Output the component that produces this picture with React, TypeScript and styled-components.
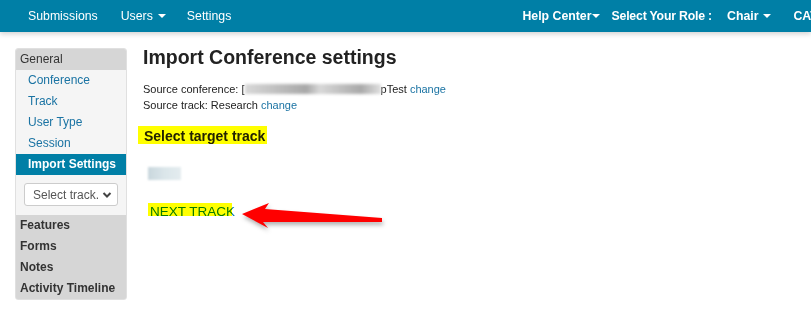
import styled, { createGlobalStyle } from 'styled-components';

const GlobalStyle = createGlobalStyle`
  html, body {
    margin: 0;
    padding: 0;
    background: #fff;
    font-family: "Liberation Sans", Arial, sans-serif;
    color: #333;
  }
`;

const NavBar = styled.nav`
  height: 32px;
  background: #007fa6;
  box-shadow: 0 2px 5px rgba(0, 0, 0, 0.18);
  display: flex;
  align-items: center;
  padding-left: 28px;
  white-space: nowrap;
  overflow: hidden;
`;

const NavGroup = styled.div<{ $right?: boolean }>`
  display: flex;
  align-items: center;
  gap: 23px;
  margin-left: ${(p) => (p.$right ? 'auto' : '0')};
  margin-right: ${(p) => (p.$right ? '-15px' : '0')};
`;

const NavItem = styled.span<{ $bold?: boolean; $ml?: number }>`
  color: #fff;
  font-size: 12.3px;
  font-weight: ${(p) => (p.$bold ? 'bold' : 'normal')};
  display: inline-flex;
  align-items: center;
  margin-left: ${(p) => p.$ml ?? 0}px;
`;

const Caret = styled.span<{ $tight?: boolean }>`
  display: inline-block;
  margin-left: ${(p) => (p.$tight ? 0 : 5)}px;
  border-left: 4px solid transparent;
  border-right: 4px solid transparent;
  border-top: 4px solid #fff;
`;

const Body = styled.div`
  display: flex;
  gap: 16px;
  padding: 16px 0 0 15px;
`;

const Sidebar = styled.aside`
  width: 110px;
  flex-shrink: 0;
  background: #f5f5f5;
  border: 1px solid #e0e0e0;
  border-radius: 3px;
  overflow: hidden;
`;

const SectionHead = styled.div<{ $bold?: boolean }>`
  background: #d6d6d6;
  padding: 0 4px;
  height: 21px;
  line-height: 21px;
  font-size: 12px;
  font-weight: ${(p) => (p.$bold ? 'bold' : 'normal')};
  color: #333;
`;

const Group = styled.div`
  background: #d6d6d6;
`;

const SideLink = styled.div<{ $active?: boolean }>`
  height: 21px;
  line-height: 21px;
  padding-left: 12px;
  font-size: 12px;
  color: ${(p) => (p.$active ? '#fff' : '#1a73a3')};
  background: ${(p) => (p.$active ? '#007fa6' : 'transparent')};
  font-weight: ${(p) => (p.$active ? 'bold' : 'normal')};
`;

const SelectWrap = styled.div`
  padding: 8px 8px 9px;
`;

const FakeSelect = styled.div`
  height: 23px;
  border: 1px solid #ccc;
  border-radius: 3px;
  background: #fff;
  display: flex;
  align-items: center;
  justify-content: space-between;
  padding: 0 5px 0 8px;
  font-size: 12px;
  color: #555;
  box-sizing: border-box;
`;

const Main = styled.main`
  position: relative;
  flex: 1;
`;

const Title = styled.h1`
  margin: -4px 0 11px;
  font-size: 19.5px;
  font-weight: bold;
  color: #222;
  line-height: 26px;
`;

const Info = styled.p`
  margin: 0;
  font-size: 11px;
  line-height: 16px;
  color: #222;
`;

const Link = styled.a`
  color: #1a73a3;
  text-decoration: none;
`;

const Blurred = styled.span`
  display: inline-block;
  width: 136px;
  height: 10px;
  vertical-align: -1px;
  background: linear-gradient(90deg, #d8d8d8, #a8a8a8 45%, #d8d8d8 55%, #a9a9a9 85%, #e0e0e0);
  filter: blur(1.5px);
`;

const Marked = styled.span`
  position: relative;
  display: inline-block;
`;

const Highlight = styled.span<{ $w: number; $h: number; $x: number; $y: number }>`
  position: absolute;
  left: ${(p) => p.$x}px;
  top: ${(p) => p.$y}px;
  width: ${(p) => p.$w}px;
  height: ${(p) => p.$h}px;
  background: #ffff00;
  mix-blend-mode: multiply;
`;

const TargetHeading = styled.div`
  margin: 14px 0 0 1px;
  font-size: 14px;
  font-weight: bold;
  color: #222;
  line-height: 18px;
`;

const TrackBlur = styled.div`
  margin: 22px 0 0 5px;
  width: 33px;
  height: 13px;
  background: linear-gradient(90deg, #c9d7dd, #dbe6ea 50%, #e4ecef);
  filter: blur(1px);
`;

const NextTrack = styled.div`
  margin: 24px 0 0 7px;
  font-size: 13.5px;
  line-height: 16px;
  color: #0a7ba8;
`;

const Arrow = styled.svg`
  position: absolute;
  left: 96px;
  top: 150px;
  filter: drop-shadow(1px 3px 2px rgba(0, 0, 0, 0.3));
`;

export default function App() {
  return (
    <>
      <GlobalStyle />
      <NavBar>
        <NavGroup>
          <NavItem>Submissions</NavItem>
          <NavItem>
            Users <Caret />
          </NavItem>
          <NavItem $ml={-2}>Settings</NavItem>
        </NavGroup>
        <NavGroup $right>
          <NavItem $bold>
            Help Center
            <Caret $tight />
          </NavItem>
          <NavItem $bold $ml={-11} style={{ letterSpacing: '-0.2px' }}>
            Select Your Role :
          </NavItem>
          <NavItem $bold $ml={-8}>
            Chair <Caret />
          </NavItem>
          <NavItem $bold $ml={-1}>CATS</NavItem>
        </NavGroup>
      </NavBar>
      <Body>
        <Sidebar>
          <SectionHead>General</SectionHead>
          <SideLink>Conference</SideLink>
          <SideLink>Track</SideLink>
          <SideLink>User Type</SideLink>
          <SideLink>Session</SideLink>
          <SideLink $active>Import Settings</SideLink>
          <SelectWrap>
            <FakeSelect>
              <span>Select track.</span>
              <svg width="10" height="8" viewBox="0 0 10 8">
                <path d="M1.5 2 L5 5.5 L8.5 2" fill="none" stroke="#444" strokeWidth="2" />
              </svg>
            </FakeSelect>
          </SelectWrap>
          <Group>
            <SectionHead $bold>Features</SectionHead>
            <SectionHead $bold>Forms</SectionHead>
            <SectionHead $bold>Notes</SectionHead>
            <SectionHead $bold>Activity Timeline</SectionHead>
          </Group>
        </Sidebar>
        <Main>
          <Title>Import Conference settings</Title>
          <Info>
            Source conference: [<Blurred />
            pTest <Link>change</Link>
          </Info>
          <Info>
            Source track: Research <Link>change</Link>
          </Info>
          <TargetHeading>
            <Marked>
              <Highlight $x={-6} $y={-1} $w={129} $h={18} />
              Select target track
            </Marked>
          </TargetHeading>
          <TrackBlur />
          <NextTrack>
            <Marked>
              <Highlight $x={-2} $y={-1} $w={84} $h={13} />
              NEXT TRACK
            </Marked>
          </NextTrack>
          <Arrow width="150" height="40" viewBox="0 0 150 40">
            <path
              d="M3 16 L30 5 L26 11 L143 20 L143 24 L24 24 L29 30 Z"
              fill="#ff0000"
            />
          </Arrow>
        </Main>
      </Body>
    </>
  );
}
